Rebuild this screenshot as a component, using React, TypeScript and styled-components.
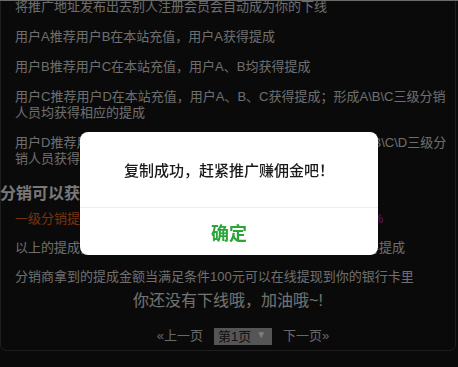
import { createGlobalStyle } from 'styled-components'
import styled from 'styled-components'

const GlobalStyle = createGlobalStyle`
    html, body {
        margin: 0;
        padding: 0;
        background: #151515;
        overflow: hidden;
    }
    body {
        font-family: "Liberation Sans", "Noto Sans CJK SC", sans-serif;
        font-size: 13px;
        color: #dcdcdc;
    }
`

const Page = styled.div`
    width: 458px;
    height: 367px;
    box-sizing: border-box;
    border-top: 1px solid #d8d8d8;
    overflow: hidden;
`

const Panel = styled.div`
    width: 456px;
    box-sizing: border-box;
    margin-top: -10px;
    border: 1px solid #3c3c3c;
    border-radius: 0 0 6px 6px;
    background: #151515;
    padding: 0 0 5px 14px;
`

const RuleList = styled.ul`
    list-style: none;
    margin: 0;
    padding: 0;
`

const Rule = styled.li<{ $tight?: boolean }>`
    line-height: 16px;
    padding: ${p => (p.$tight ? '6.5px 0' : '7px 0')};
`

const Heading = styled.h3`
    margin: 10px 0 0 -15px;
    font-size: 16px;
    line-height: 20px;
    font-weight: bold;
    color: #f0f0f0;
`

const Rate = styled.span<{ $tone: 'orange' | 'blue' | 'purple' }>`
    color: ${p => (p.$tone === 'orange' ? '#e8661c' : p.$tone === 'blue' ? '#3a8ee6' : '#c232e0')};
`

const Empty = styled.p`
    margin: 0 0 0 -14px;
    text-align: center;
    font-size: 16px;
    line-height: 20px;
    color: #e4e4e4;
`

const Pager = styled.div`
    margin: 16px 0 0 16px;
    display: flex;
    justify-content: center;
    align-items: center;
    gap: 11px;
    line-height: 18px;
    font-size: 13px;
`

const PageLink = styled.a`
    color: #d0d0d0;
    text-decoration: none;
`

const PageSelect = styled.span`
    display: inline-flex;
    align-items: center;
    gap: 5px;
    height: 17px;
    padding: 0 6px 0 4px;
    background: #aaaaaa;
    color: #222;
    font-size: 13px;
    line-height: 17px;
`

const Caret = styled.span`
    color: #fafafa;
    font-size: 10px;
    margin-top: -3px;
`

const Mask = styled.div`
    position: fixed;
    inset: 0;
    background: rgba(0, 0, 0, 0.5);
    display: flex;
    justify-content: center;
    align-items: flex-start;
    padding-top: 132px;
`

const Dialog = styled.div`
    width: 298px;
    background: #fff;
    border-radius: 8px;
    overflow: hidden;
`

const Message = styled.div`
    height: 76px;
    box-sizing: border-box;
    padding-top: 29px;
    text-align: center;
    font-size: 15px;
    line-height: 20px;
    color: #1a1a1a;
    font-weight: 500;
    border-bottom: 1px solid #eeeeee;
`

const Confirm = styled.button`
    display: block;
    width: 100%;
    height: 47px;
    border: 0;
    background: transparent;
    font-family: inherit;
    font-size: 18px;
    font-weight: bold;
    color: #2aa537;
    padding: 0;
    cursor: pointer;
`

export default function App() {
    return (
        <>
            <GlobalStyle />
            <Page>
                <Panel>
                    <RuleList>
                        <Rule>将推广地址发布出去别人注册会员会自动成为你的下线</Rule>
                        <Rule>用户A推荐用户B在本站充值，用户A获得提成</Rule>
                        <Rule>用户B推荐用户C在本站充值，用户A、B均获得提成</Rule>
                        <Rule>用户C推荐用户D在本站充值，用户A、B、C获得提成；形成A\B\C三级分销人员均获得相应的提成</Rule>
                        <Rule>用户D推荐用户E在本站充值，用户B、C、D均获得提成；形成B\C\D三级分销人员获得相应的提成</Rule>
                    </RuleList>
                    <Heading>分销可以获得的提成比例</Heading>
                    <RuleList>
                        <Rule $tight>
                            <Rate $tone="orange">一级分销提成为8%，</Rate>
                            <Rate $tone="blue">二级分销提成为5%，</Rate>
                            <Rate $tone="purple">三级分销商提成为2%</Rate>
                        </Rule>
                        <Rule $tight>以上的提成比例按照下线在本站充值的金额计算，充值越多获得提成</Rule>
                        <Rule $tight>分销商拿到的提成金额当满足条件100元可以在线提现到你的银行卡里</Rule>
                    </RuleList>
                    <Empty>你还没有下线哦，加油哦~!</Empty>
                    <Pager>
                        <PageLink href="#">«上一页</PageLink>
                        <PageSelect>
                            第1页<Caret>▼</Caret>
                        </PageSelect>
                        <PageLink href="#">下一页»</PageLink>
                    </Pager>
                </Panel>
            </Page>
            <Mask>
                <Dialog>
                    <Message>复制成功，赶紧推广赚佣金吧！</Message>
                    <Confirm>确定</Confirm>
                </Dialog>
            </Mask>
        </>
    )
}
